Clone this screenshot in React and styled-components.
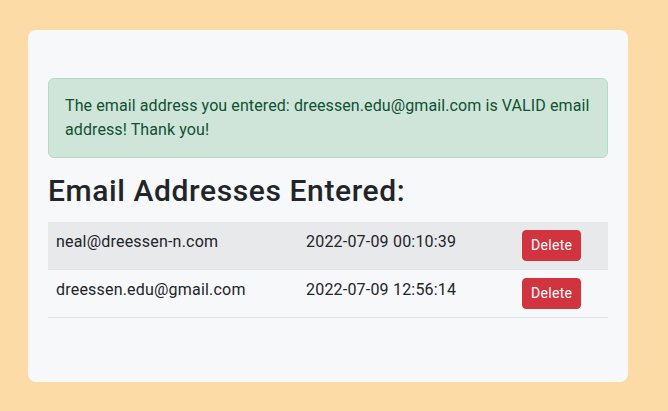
import React from 'react'
import styled, { createGlobalStyle } from 'styled-components'

const GlobalStyle = createGlobalStyle`
  html, body {
    margin: 0;
    padding: 0;
    background: #fddba7;
    font-family: Roboto, "Noto Sans", "Liberation Sans", sans-serif;
    letter-spacing: 0.2px;
    color: #212529;
  }
  * { box-sizing: border-box; }
`

const Page = styled.div`
  padding: 30px 40px 29px 28px;
  min-height: 411px;
`

const Card = styled.div`
  width: 600px;
  height: 352px;
  background: #f7f8fa;
  border-radius: 8px;
  padding: 48px 20px 0;
`

const Alert = styled.div`
  background: #cfe5d9;
  border: 1px solid #b6d8c6;
  color: #0f5132;
  border-radius: 6px;
  padding: 15px 16px;
  font-size: 16px;
  letter-spacing: 0.1px;
  line-height: 24px;
  margin-bottom: 16px;
`

const Heading = styled.h3`
  margin: 0 0 14px;
  font-size: 30px;
  font-weight: 500;
  letter-spacing: 0.6px;
  line-height: 34px;
  color: #212529;
`

const Table = styled.table`
  width: 100%;
  border-collapse: collapse;
  font-size: 16px;
  line-height: 24px;
`

const Row = styled.tr`
  background: ${({ $striped }) => ($striped ? '#e8e9eb' : 'transparent')};
  border-bottom: 1px solid #dee2e6;
`

const Cell = styled.td`
  padding: 8px;
  vertical-align: top;
  width: ${({ $w }) => $w}px;
`

const DeleteButton = styled.button`
  font-family: inherit;
  font-size: 14px;
  letter-spacing: 0.3px;
  line-height: 21px;
  padding: 4px 8px;
  color: #fff;
  background: #d1343f;
  border: 1px solid #d1343f;
  border-radius: 4px;
  cursor: pointer;
`

const entries = [
  { email: 'neal@dreessen-n.com', date: '2022-07-09 00:10:39' },
  { email: 'dreessen.edu@gmail.com', date: '2022-07-09 12:56:14' },
]

const App = () => {
  return (
    <Page>
      <GlobalStyle />
      <Card>
        <Alert>
          The email address you entered: dreessen.edu@gmail.com is VALID email address! Thank you!
        </Alert>
        <Heading>Email Addresses Entered:</Heading>
        <Table>
          <tbody>
            {entries.map((e, i) => (
              <Row key={e.email} $striped={i % 2 === 0}>
                <Cell $w={250}>{e.email}</Cell>
                <Cell $w={216}>{e.date}</Cell>
                <Cell $w={94}>
                  <DeleteButton>Delete</DeleteButton>
                </Cell>
              </Row>
            ))}
          </tbody>
        </Table>
      </Card>
    </Page>
  )
}

export default App
